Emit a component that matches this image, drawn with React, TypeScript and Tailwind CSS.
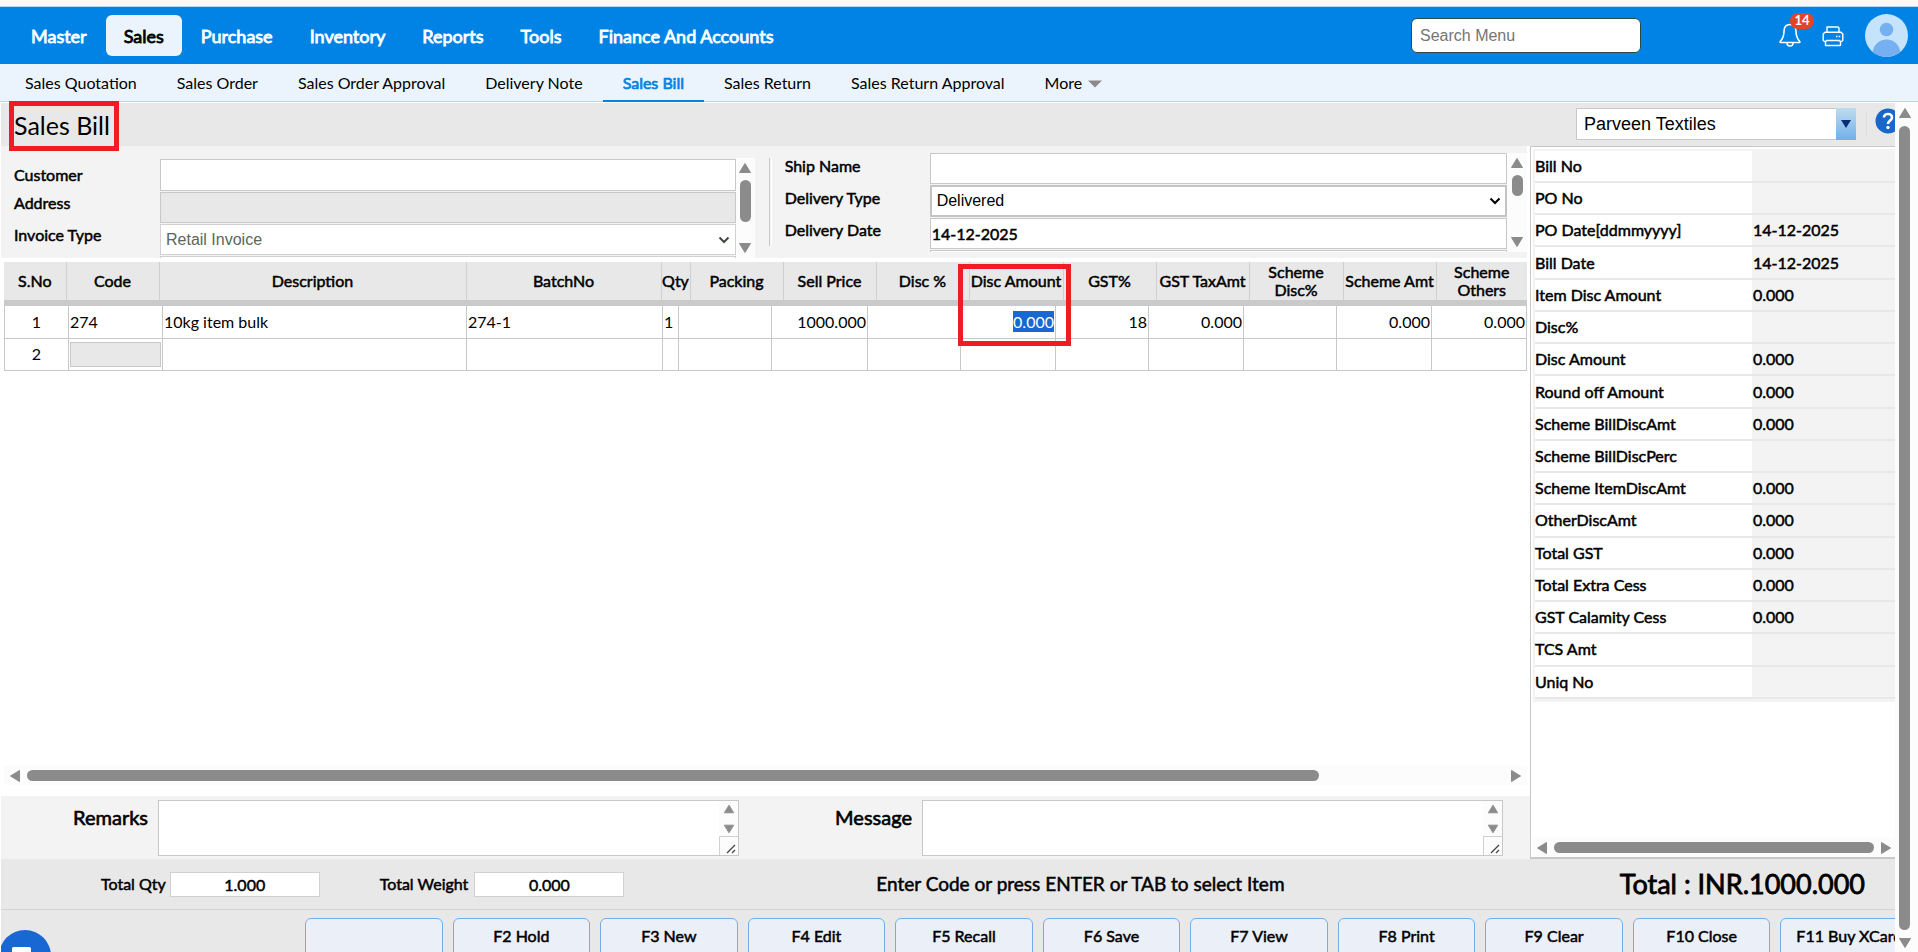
import * as React from 'react'

const menus = ['Master', 'Sales', 'Purchase', 'Inventory', 'Reports', 'Tools', 'Finance And Accounts']

const subMenus = [
  'Sales Quotation',
  'Sales Order',
  'Sales Order Approval',
  'Delivery Note',
  'Sales Bill',
  'Sales Return',
  'Sales Return Approval',
]

const headerCols = [
  { label: 'S.No', width: 62 },
  { label: 'Code', width: 93 },
  { label: 'Description', width: 0 },
  { label: 'BatchNo', width: 195 },
  { label: 'Qty', width: 29 },
  { label: 'Packing', width: 93 },
  { label: 'Sell Price', width: 93 },
  { label: 'Disc %', width: 93 },
  { label: 'Disc Amount', width: 94 },
  { label: 'GST%', width: 93 },
  { label: 'GST TaxAmt', width: 93 },
  { label: 'Scheme Disc%', width: 94 },
  { label: 'Scheme Amt', width: 93 },
  { label: 'Scheme Others', width: 91 },
]

const bodyWidths = [64, 94, 0, 196, 16, 93, 96, 93, 95, 93, 95, 93, 95, 95]

const summary = [
  ['Bill No', ''],
  ['PO No', ''],
  ['PO Date[ddmmyyyy]', '14-12-2025'],
  ['Bill Date', '14-12-2025'],
  ['Item Disc Amount', '0.000'],
  ['Disc%', ''],
  ['Disc Amount', '0.000'],
  ['Round off Amount', '0.000'],
  ['Scheme BillDiscAmt', '0.000'],
  ['Scheme BillDiscPerc', ''],
  ['Scheme ItemDiscAmt', '0.000'],
  ['OtherDiscAmt', '0.000'],
  ['Total GST', '0.000'],
  ['Total Extra Cess', '0.000'],
  ['GST Calamity Cess', '0.000'],
  ['TCS Amt', ''],
  ['Uniq No', ''],
]

const actions = [
  '', 'F2 Hold', 'F3 New', 'F4 Edit', 'F5 Recall', 'F6 Save',
  'F7 View', 'F8 Print', 'F9 Clear', 'F10 Close', 'F11 Buy XCard',
]

function Arrow({ dir, size = 'h-3.5 w-3.5' }: { dir: 'up' | 'down' | 'left' | 'right'; size?: string }) {
  const paths = {
    up: 'M7 2.5 L12.5 11.5 H1.5 Z',
    down: 'M7 11.5 L1.5 2.5 H12.5 Z',
    left: 'M2.5 7 L11.5 1.5 V12.5 Z',
    right: 'M11.5 7 L2.5 1.5 V12.5 Z',
  }
  return (
    <svg viewBox="0 0 14 14" className={'shrink-0 ' + size}>
      <path d={paths[dir]} fill="#8b8b8b" stroke="#8b8b8b" strokeLinejoin="round" />
    </svg>
  )
}

function Chevron({ color }: { color: string }) {
  return (
    <svg viewBox="0 0 12 8" className="pointer-events-none absolute top-1/2 right-1.5 h-2 w-3 -translate-y-1/2">
      <path d="M1.5 1.5 L6 6 L10.5 1.5" fill="none" stroke={color} strokeWidth="2" />
    </svg>
  )
}

function SelectBox({ id, value, className, chevron }: { id: string; value: string; className: string; chevron: string }) {
  return (
    <div className="relative">
      <select id={id} className={'block w-full appearance-none bg-white font-["Liberation_Sans",sans-serif] text-base ' + className}>
        <option>{value}</option>
      </select>
      <Chevron color={chevron} />
    </div>
  )
}

function NoteBox({ id, label }: { id: string; label: string }) {
  return (
    <>
      <label htmlFor={id} className="pt-[3px] pr-2.5 text-right text-xl [-webkit-text-stroke:0.6px_black]">{label}</label>
      <div className="flex h-14 border border-[#c8c8c8] bg-white">
        <textarea id={id} className="min-w-0 flex-1 resize-none outline-none" />
        <div className="flex w-[19px] flex-col items-center bg-[#fcfcfc] pt-0.5">
          <Arrow dir="up" size="h-3 w-3" />
          <div className="h-2" />
          <Arrow dir="down" size="h-3 w-3" />
          <svg viewBox="0 0 19 19" className="mt-auto h-[19px] w-[19px] shrink-0">
            <path d="M0.5 19 V0.5 H19" fill="none" stroke="#d0d0d0" />
            <path d="M8 17 L16 9 M13 17 L16 14" stroke="#444" strokeWidth="1.3" />
          </svg>
        </div>
      </div>
    </>
  )
}

function TopBar() {
  return (
    <header className="flex h-[58px] shrink-0 items-center border-t border-[#b9d9ee] bg-[#0183e6] pr-2.5 pl-[13px]">
      <nav className="flex gap-px">
        {menus.map((m) => (
          <a
            key={m}
            href="#"
            className={
              'flex h-[41px] items-center rounded-md px-[18px] text-lg ' +
              (m === 'Sales'
                ? 'bg-[#ebf4fc] text-black [-webkit-text-stroke:0.8px_black]'
                : 'text-white [-webkit-text-stroke:0.8px_white]')
            }
          >
            {m}
          </a>
        ))}
      </nav>
      <input
        aria-label="Search Menu"
        placeholder="Search Menu"
        className='ml-auto h-[35px] w-[230px] rounded-md border border-[#2c4a44] bg-white px-2 font-["Liberation_Sans",sans-serif] text-base placeholder:text-[#757575]'
      />
      <button aria-label="Notifications" className="relative mb-0.5 ml-[137px]">
        <svg viewBox="0 0 24 24" className="h-6 w-6" fill="none" stroke="white" strokeWidth="1.6" strokeLinejoin="round">
          <path d="M12 1.5 C8 1.5 6 4.5 6 8.5 C6 14 4.5 16 2.2 18.5 V19.5 H21.8 V18.5 C19.5 16 18 14 18 8.5 C18 4.5 16 1.5 12 1.5 Z" />
          <path d="M9 20 C9 22 10.3 23 12 23 C13.7 23 15 22 15 20" />
        </svg>
        <span className="absolute -top-2.5 left-3 flex h-4 w-6 items-center justify-center rounded-full bg-[#e0452c] text-[13px] font-bold text-white">
          14
        </span>
      </button>
      <button aria-label="Print" className="ml-5">
        <svg viewBox="0 0 22 22" className="h-[22px] w-[22px]" fill="none" stroke="white" strokeWidth="1.4" strokeLinejoin="round">
          <path d="M5 7 V2 H16 L17 3 V7" />
          <path d="M3.5 16.5 H2.5 L1.2 15.5 V9 L3 7.2 H19 L20.8 9 V15.5 L19.5 16.5 H18.5" />
          <path d="M4.5 15.5 H17.5 L18.5 17 V20.5 H3.5 V17 Z" />
          <path d="M14 11.5 H15.5 M16.7 11.5 H18.2" />
        </svg>
      </button>
      <svg viewBox="0 0 43 43" className="ml-[21px] h-[43px] w-[43px]">
        <clipPath id="face"><circle cx="21.5" cy="21.5" r="21.5" /></clipPath>
        <circle cx="21.5" cy="21.5" r="21.5" fill="#c5e4fb" />
        <circle cx="21.5" cy="15.5" r="6.8" fill="#76b0f1" />
        <ellipse cx="21.5" cy="39.5" rx="13.8" ry="14" fill="#76b0f1" clipPath="url(#face)" />
      </svg>
    </header>
  )
}

function SubMenu() {
  return (
    <nav className="flex h-[38px] shrink-0 border-b border-[#bad8ea] bg-[#ebf4fc] pl-[5px]">
      {subMenus.map((m) => (
        <a
          key={m}
          href="#"
          className={
            '-mb-px flex items-center border-b-2 px-5 pt-0.5 text-base ' +
            (m === 'Sales Bill'
              ? 'border-[#0183e6] text-[#0183e6] [-webkit-text-stroke:0.7px_#0183e6]'
              : 'border-transparent text-black')
          }
        >
          {m}
        </a>
      ))}
      <button className="flex items-center gap-1.5 px-5 text-base">
        More
        <svg viewBox="0 0 14 8" className="mt-0.5 h-2 w-3.5"><path d="M0 0.5 H14 L7 7.5 Z" fill="#8b8b8b" /></svg>
      </button>
    </nav>
  )
}

function BillForm() {
  return (
    <div className="mr-[3px] ml-px grid h-28 shrink-0 grid-cols-[101fr_99fr] bg-[#f3f3f3]">
      <div className="mt-3 flex overflow-hidden">
        <div className="grid flex-1 grid-cols-[159px_1fr] content-start [-webkit-text-stroke:0.5px_black]">
          <div className="pl-[13px]">
            <label htmlFor="customer" className="mt-[3px] block h-7 leading-7">Customer</label>
            <label htmlFor="address" className="block h-8 leading-7">Address</label>
            <label htmlFor="invoiceType" className="block h-7 leading-7">Invoice Type</label>
          </div>
          <div className="flex flex-col gap-px pt-px [-webkit-text-stroke:0]">
            <input id="customer" className="h-8 border border-[#c8c8c8] bg-white px-1" />
            <input id="address" disabled className="h-[31px] border border-[#c8c8c8] bg-[#e8e8e8] px-1" />
            <SelectBox id="invoiceType" value="Retail Invoice" chevron="#3d4a40" className="h-[31px] border border-[#d0d0d0] px-[5px] text-[#5c665e]" />
            <div className="h-4 border border-[#d0d0d0] bg-white" />
          </div>
        </div>
        <div className="flex w-[19px] flex-col items-center bg-[#fcfcfc] py-[3px]">
          <Arrow dir="up" />
          <div className="mt-[5px] mb-auto h-[42px] w-[11px] rounded-full bg-[#8b8b8b]" />
          <Arrow dir="down" />
        </div>
        <div className="ml-3.5 h-[88px] w-[3px] border-x border-r-white border-l-[#c8c8c8]" />
      </div>
      <div className="mt-[7px] mb-1.5 ml-[13px] flex overflow-hidden">
        <div className="grid flex-1 grid-cols-[145px_1fr] content-start [-webkit-text-stroke:0.5px_black]">
          <div className="pt-px">
            <label htmlFor="shipName" className="block h-8 leading-6">Ship Name</label>
            <label htmlFor="deliveryType" className="block h-8 leading-6">Delivery Type</label>
            <label htmlFor="deliveryDate" className="block h-8 leading-6">Delivery Date</label>
          </div>
          <div className="flex flex-col gap-px [-webkit-text-stroke:0]">
            <input id="shipName" className="h-[31px] border border-[#c8c8c8] bg-white px-1" />
            <SelectBox id="deliveryType" value="Delivered" chevron="#000000" className="h-8 border-2 border-[#c4c4c4] px-[5px] text-black" />
            <input id="deliveryDate" defaultValue="14-12-2025" className="h-[31px] border border-[#c8c8c8] bg-white px-px [-webkit-text-stroke:0.5px_black]" />
            <div className="h-4 border border-[#c8c8c8] bg-white" />
          </div>
        </div>
        <div className="flex w-5 flex-col items-center bg-[#fcfcfc] py-[3px]">
          <Arrow dir="up" />
          <div className="mt-[5px] mb-auto h-[21px] w-[11px] rounded-full bg-[#8b8b8b]" />
          <Arrow dir="down" />
        </div>
      </div>
    </div>
  )
}

function Cols({ widths }: { widths: number[] }) {
  return (
    <colgroup>
      {widths.map((w, i) => (
        <col key={i} style={w ? { width: w } : undefined} />
      ))}
    </colgroup>
  )
}

function ItemGrid() {
  const row = ['1', '274', '10kg item bulk', '274-1', '1', '', '1000.000', '', '0.000', '18', '0.000', '', '0.000', '0.000']

  return (
    <div className="mt-1 mr-[3px] ml-1 flex-1">
      <table className="w-full table-fixed border-collapse">
        <Cols widths={headerCols.map((c) => c.width)} />
        <thead>
          <tr className="h-[38px] bg-[#e8e8e8]">
            {headerCols.map((c) => (
              <th key={c.label} className="relative border-r border-[#d0d0d0] p-0 text-base leading-[18px] font-normal [-webkit-text-stroke:0.5px_black] last:border-r-0">
                <span className={c.label.startsWith('Scheme') && c.label !== 'Scheme Amt' ? '' : 'whitespace-nowrap'}>{c.label}</span>
                {c.label === 'Disc Amount' && (
                  <div className="absolute top-0.5 -right-2 -left-3 z-10 h-[82px] border-[5px] border-[#ee1c24]" />
                )}
              </th>
            ))}
          </tr>
        </thead>
      </table>
      <div className="h-1.5 bg-[#cacaca]" />
      <table className="w-full table-fixed border-collapse text-base">
        <Cols widths={bodyWidths} />
        <tbody>
          <tr className="h-8">
            {row.map((v, i) => (
              <td
                key={i}
                className={
                  'border border-t-0 border-[#c8c8c8] px-px whitespace-nowrap ' +
                  (i === 0 ? 'text-center' : i >= 5 ? 'text-right' : 'text-left')
                }
              >
                {i === 8 ? <span className="bg-[#1967d2] py-px text-white">{v}</span> : v}
              </td>
            ))}
          </tr>
          <tr className="h-8">
            {row.map((_, i) => (
              <td key={i} className="border border-[#c8c8c8] p-0 text-center">
                {i === 0 && '2'}
                {i === 1 && <input aria-label="Code" className="mx-auto block h-[25px] w-[91px] border border-[#c8c8c8] bg-[#e8e8e8]" />}
              </td>
            ))}
          </tr>
        </tbody>
      </table>
    </div>
  )
}

function HScroll({ thumb }: { thumb: string }) {
  return (
    <div className="flex h-[19px] shrink-0 items-center gap-[5px] bg-[#fcfcfc] px-0.5">
      <Arrow dir="left" />
      <div className="flex-1">
        <div className={'h-[11px] rounded-full bg-[#8b8b8b] ' + thumb} />
      </div>
      <Arrow dir="right" />
    </div>
  )
}

function SummaryPanel() {
  return (
    <aside className="flex w-[365px] shrink-0 flex-col overflow-hidden border-t border-b-2 border-l border-[#c8c8c8] bg-white pt-0.5 pl-0.5">
      <div className="bg-[#f3f3f3] pt-0.5 pb-[3px] pl-0.5">
        <table className="h-[548px] w-full table-fixed border-collapse text-base">
          <colgroup>
            <col className="w-[217px]" />
            <col />
          </colgroup>
          <tbody>
            {summary.map(([label, value]) => (
              <tr key={label}>
                <th className="border-b-2 border-[#e8e8e8] bg-white p-0 text-left font-normal [-webkit-text-stroke:0.5px_black]">{label}</th>
                <td className="border-b-2 border-[#e8e8e8] p-0 pl-px [-webkit-text-stroke:0.5px_black]">{value}</td>
              </tr>
            ))}
          </tbody>
        </table>
      </div>
      <div className="mt-auto">
        <HScroll thumb="w-full" />
      </div>
    </aside>
  )
}

function Footer() {
  return (
    <footer className="relative ml-px shrink-0 bg-[#e8e8e8]">
      <div className="flex h-[51px] items-center border-b border-[#d4d4d4] pr-[30px] pl-[100px] text-base [-webkit-text-stroke:0.5px_black]">
        <label htmlFor="totalQty">Total Qty</label>
        <input id="totalQty" defaultValue="1.000" className="ml-1 h-[25px] w-[150px] border border-[#d0d0d0] bg-white text-center" />
        <label htmlFor="totalWeight" className="ml-[60px]">Total Weight</label>
        <input id="totalWeight" defaultValue="0.000" className="ml-1.5 h-[25px] w-[150px] border border-[#d0d0d0] bg-white text-center" />
        <div className="ml-[252px] text-[19px]">Enter Code or press ENTER or TAB to select Item</div>
        <div className="ml-auto text-[27px] [-webkit-text-stroke:0.8px_black]">Total : INR.1000.000</div>
      </div>
      <div className="h-[42px] overflow-hidden pt-2 pl-[304px]">
        <div className="-mr-[23px] grid grid-cols-11 gap-2.5">
          {actions.map((a) => (
            <button key={a} className="h-10 rounded-md border border-[#74aee8] bg-[#eaeff8] pb-1 text-base whitespace-nowrap [-webkit-text-stroke:0.5px_black]">
              {a}
            </button>
          ))}
        </div>
      </div>
      <button aria-label="Chat" className="absolute bottom-0 left-0 h-[22px] w-[52px] overflow-hidden">
        <svg viewBox="0 0 52 22" className="h-[22px] w-[52px]">
          <circle cx="24" cy="26" r="26" fill="#1967d2" />
          <rect x="11" y="17" width="19" height="12" rx="1.5" fill="white" />
        </svg>
      </button>
    </footer>
  )
}

export default function App() {
  const [company, setCompany] = React.useState('Parveen Textiles')

  return (
    <div className="flex h-screen flex-col overflow-hidden bg-white font-[Lato,sans-serif] text-base text-black">
      <div className="h-1.5 shrink-0 bg-[#fbf8fa]" />
      <TopBar />
      <SubMenu />
      <div className="mt-px flex min-h-0 flex-1">
        <main className="flex min-w-0 flex-1 flex-col">
          <div className="ml-px flex h-[43px] shrink-0 items-center bg-[#e8e8e8] pb-px pl-2">
            <h1 className="relative z-10 -mt-1 -mb-2 flex h-[50px] w-[110px] items-center border-[5px] border-[#ee1c24] text-[25px] whitespace-nowrap">Sales Bill</h1>
            <div className="relative ml-auto w-[280px]">
              <select
                aria-label="Company"
                value={company}
                onChange={(e) => setCompany(e.target.value)}
                className='block h-8 w-full appearance-none border border-[#c8c8c8] bg-white px-[7px] font-["Liberation_Sans",sans-serif] text-lg'
              >
                <option>Parveen Textiles</option>
              </select>
              <div className="pointer-events-none absolute top-0 right-0 flex h-8 w-5 items-center justify-center bg-linear-to-b from-[#bfdcee] to-[#6fb0ea]">
                <svg viewBox="0 0 10 8" className="h-2 w-2.5"><path d="M0 0 H10 L5 8 Z" fill="#0b2e78" /></svg>
              </div>
            </div>
            <div className="ml-2.5 h-6 w-px bg-[#e0e0e0]" />
            <button aria-label="Help" className="ml-2 w-5 overflow-hidden">
              <svg viewBox="0 0 26 26" className="mb-1.5 h-[26px] w-[26px]">
                <circle cx="13" cy="13" r="12.5" fill="#1967c8" />
                <path d="M9 9.5 C9 4.8 17 4.8 17 9.5 C17 12.5 13 12.5 13 16" fill="none" stroke="white" strokeWidth="2.6" />
                <circle cx="13" cy="19.5" r="1.7" fill="white" />
              </svg>
            </button>
          </div>
          <div className="flex min-h-0 flex-1">
            <div className="flex min-w-0 flex-1 flex-col">
              <BillForm />
              <ItemGrid />
              <div className="mr-[3px] mb-[11px] ml-1 bg-[#fcfcfc] px-0.5">
                <HScroll thumb="w-7/8" />
              </div>
              <div className="ml-px grid h-[63px] shrink-0 grid-cols-[157px_1fr_183px_1fr] bg-[#f3f3f3] pt-1 pr-[27px]">
                <NoteBox id="remarks" label="Remarks" />
                <NoteBox id="message" label="Message" />
              </div>
            </div>
            <SummaryPanel />
          </div>
          <Footer />
        </main>
        <div className="flex w-[23px] shrink-0 flex-col items-center bg-[#fcfcfc] pt-[3px] pr-1 pb-0.5">
          <Arrow dir="up" />
          <div className="my-1.5 w-[11px] flex-1 rounded-full bg-[#8b8b8b]" />
          <Arrow dir="down" />
        </div>
      </div>
    </div>
  )
}
